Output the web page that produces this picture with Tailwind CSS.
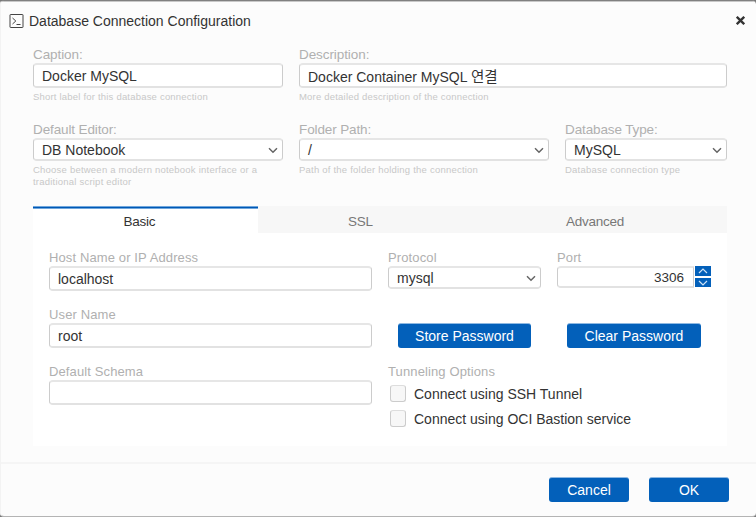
<!DOCTYPE html>
<html lang="en">
<head>
<meta charset="utf-8">
<title>Database Connection Configuration</title>
<script src="https://cdn.jsdelivr.net/npm/@tailwindcss/browser@4"></script>
</head>
<body class="bg-[#777]">
<div class="w-[756px] h-[517px] flex flex-col overflow-hidden rounded-[4px] bg-[#fcfcfc] border-l border-l-[#f3f3f3] border-t border-t-[#808080] border-b border-b-[#b4b4b4] font-['Liberation_Sans','Noto_Sans_CJK_KR',sans-serif] text-[14px] text-[#333]">
  <header class="h-[45px] shrink-0 border-t border-[#c8c8c8] flex justify-between pl-[8px] pr-[11px] pt-[11px]">
    <div class="flex h-4 items-center">
      <svg class="mr-[5px] mt-px" width="15" height="15" viewBox="0 0 15 15" fill="none" stroke="#444"><rect x="1" y=".5" width="13" height="13" rx=".5"/><path d="M3.5 4 6.8 7 3.5 10M7.5 10.5h4"/></svg>
      <h1 class="leading-4">Database Connection Configuration</h1>
    </div>
    <svg class="mt-[3px]" width="9" height="9" viewBox="0 0 9 9" fill="none" stroke="#333" stroke-width="2.3"><path d="M.8.8 8.2 8.2M8.2.8.8 8.2"/></svg>
  </header>

  <main class="pl-8 w-[726px] h-[415px] shrink-0">
    <div class="h-[75px] grid grid-cols-[250px_428px] gap-x-4">
      <div>
        <div class="h-[17px] leading-[18px] text-[13.5px] tracking-[-0.08px] text-[#b0b0b0]">Caption:</div>
        <div class="h-[25px] rounded-[4px] border border-[#ccc] border-t-2 border-t-[#e6e6e6] border-b-2 border-b-[#e2e2e2] bg-white px-2 leading-[22px]">Docker MySQL</div>
        <div class="mt-[3px] leading-3 text-[9.5px] tracking-[0.2px] text-[#c8c8c8]">Short label for this database connection</div>
      </div>
      <div>
        <div class="h-[17px] leading-[18px] text-[13.5px] tracking-[-0.08px] text-[#b0b0b0]">Description:</div>
        <div class="h-[25px] rounded-[4px] border border-[#ccc] border-t-2 border-t-[#e6e6e6] border-b-2 border-b-[#e2e2e2] bg-white px-2 leading-[24px]">Docker Container MySQL <span class="text-[14.5px] font-normal leading-none">연결</span></div>
        <div class="mt-[3px] leading-3 text-[9.5px] tracking-[0.2px] text-[#c8c8c8]">More detailed description of the connection</div>
      </div>
    </div>
    <div class="h-[85px] grid grid-cols-[250px_250px_162px] gap-x-4">
      <div>
        <div class="h-[17px] leading-[18px] text-[13.5px] tracking-[-0.12px] text-[#b0b0b0]">Default Editor:</div>
        <div class="h-[23px] rounded-[4px] border border-[#ccc] border-t-2 border-t-[#e6e6e6] border-b-2 border-b-[#e2e2e2] bg-white pl-2 pr-1 flex items-center justify-between"><span class="pt-px">DB Notebook</span><svg class="mt-px" width="10" height="7" viewBox="0 0 10 7" fill="none" stroke="#666" stroke-width="1.5"><path d="m1 1.2 4 4 4-4"/></svg></div>
        <div class="mt-[3px] leading-3 text-[9.5px] tracking-[0.22px] text-[#c8c8c8]">Choose between a modern notebook interface or a traditional script editor</div>
      </div>
      <div>
        <div class="h-[17px] leading-[18px] text-[13.5px] tracking-[-0.12px] text-[#b0b0b0]">Folder Path:</div>
        <div class="h-[23px] rounded-[4px] border border-[#ccc] border-t-2 border-t-[#e6e6e6] border-b-2 border-b-[#e2e2e2] bg-white pl-2 pr-1 flex items-center justify-between"><span class="pt-px">/</span><svg class="mt-px" width="10" height="7" viewBox="0 0 10 7" fill="none" stroke="#666" stroke-width="1.5"><path d="m1 1.2 4 4 4-4"/></svg></div>
        <div class="mt-[3px] leading-3 text-[9.5px] tracking-[0.22px] text-[#c8c8c8]">Path of the folder holding the connection</div>
      </div>
      <div>
        <div class="h-[17px] leading-[18px] text-[13.5px] tracking-[-0.12px] text-[#b0b0b0]">Database Type:</div>
        <div class="h-[23px] rounded-[4px] border border-[#ccc] border-t-2 border-t-[#e6e6e6] border-b-2 border-b-[#e2e2e2] bg-white pl-2 pr-1 flex items-center justify-between"><span class="pt-px">MySQL</span><svg class="mt-px" width="10" height="7" viewBox="0 0 10 7" fill="none" stroke="#666" stroke-width="1.5"><path d="m1 1.2 4 4 4-4"/></svg></div>
        <div class="mt-[3px] leading-3 text-[9.5px] tracking-[0.22px] text-[#c8c8c8]">Database connection type</div>
      </div>
    </div>

    <nav class="h-7 grid grid-cols-[225px_205px_264px] grid-rows-[28px] text-center text-[13.5px] tracking-[-0.25px] leading-[31px] bg-[#f7f7f7] border-b border-white">
      <div class="h-7 bg-white border-t border-[#6fa6dc] pr-3"><div class="-mr-3 h-px bg-[#0058b5]"></div><div class="-mr-3 h-px bg-[#6fa6dc]"></div><div class="leading-[25px]">Basic</div></div>
      <div class="h-[27px] text-[#777]">SSL</div>
      <div class="h-[27px] text-[#777]">Advanced</div>
    </nav>
    <section class="h-[212px] bg-white px-4 pt-[15px] flex gap-4">
      <div class="w-[323px]">
        <div class="h-[17px] leading-[17px] text-[13px] tracking-[0.12px] text-[#b0b0b0]">Host Name or IP Address</div>
        <div class="h-[25px] mb-[15px] rounded-[4px] border border-[#ccc] border-t-2 border-t-[#e6e6e6] border-b-2 border-b-[#e2e2e2] bg-white px-2 leading-[22px]">localhost</div>
        <div class="h-[17px] leading-[17px] text-[13px] tracking-[0.12px] text-[#b0b0b0]">User Name</div>
        <div class="h-[25px] mb-[15px] rounded-[4px] border border-[#ccc] border-t-2 border-t-[#e6e6e6] border-b-2 border-b-[#e2e2e2] bg-white px-2 leading-[22px]">root</div>
        <div class="h-[17px] leading-[17px] text-[13px] tracking-[0.12px] text-[#b0b0b0]">Default Schema</div>
        <div class="h-[25px] rounded-[4px] border border-[#ccc] border-t-2 border-t-[#e6e6e6] border-b-2 border-b-[#e2e2e2] bg-white"></div>
      </div>
      <div class="w-[323px]">
        <div class="flex gap-4 h-[74px]">
          <div class="w-[153px]">
            <div class="h-[17px] leading-[17px] text-[13px] tracking-[0.12px] text-[#b0b0b0]">Protocol</div>
            <div class="h-[23px] rounded-[4px] border border-[#ccc] border-t-2 border-t-[#e6e6e6] border-b-2 border-b-[#e2e2e2] bg-white pl-2 pr-1 flex items-center justify-between"><span class="pt-px">mysql</span><svg class="mt-px" width="10" height="7" viewBox="0 0 10 7" fill="none" stroke="#666" stroke-width="1.5"><path d="m1 1.2 4 4 4-4"/></svg></div>
          </div>
          <div class="w-[154px]">
            <div class="h-[17px] leading-[17px] text-[13px] tracking-[0.12px] text-[#b0b0b0]">Port</div>
            <div class="flex h-[22px]">
              <div class="w-[137px] mr-px rounded-l-[4px] border border-[#ccc] border-t-2 border-t-[#e6e6e6] border-b-2 border-b-[#e2e2e2] text-right pr-[9px] text-[13.5px] leading-[19px]">3306</div>
              <div class="w-4 flex flex-col gap-[2px]">
                <div class="h-[10px] bg-[#0360ba] flex items-center justify-center"><svg width="10" height="6" viewBox="0 0 10 6" fill="none" stroke="#cde2f5" stroke-width="1.2"><path d="m1 5 4-4 4 4"/></svg></div>
                <div class="h-[9px] bg-[#0360ba] flex items-center justify-center"><svg width="10" height="6" viewBox="0 0 10 6" fill="none" stroke="#cde2f5" stroke-width="1.2"><path d="m1 1 4 4 4-4"/></svg></div>
              </div>
            </div>
          </div>
        </div>
        <div class="flex gap-9 pl-[10px] h-10 text-white text-center leading-[26px]">
          <div class="w-[133px] h-[25px] rounded-[3px] border-t border-[#8fb9e2] bg-[#0360ba] leading-[24px]">Store Password</div>
          <div class="w-[134px] h-[25px] rounded-[3px] border-t border-[#8fb9e2] bg-[#0360ba] leading-[24px]">Clear Password</div>
        </div>
        <div class="h-[22px] leading-[17px] text-[13px] tracking-[0.12px] text-[#b0b0b0]">Tunneling Options</div>
        <div class="flex items-center h-[17px] mb-2 pl-[2px] gap-2"><span class="w-4 h-[17px] rounded-[3px] border border-[#ccc] border-t-[#ddd] bg-[#f7f7f7]"></span><span class="pt-px">Connect using SSH Tunnel</span></div>
        <div class="flex items-center h-[17px] pl-[2px] gap-2"><span class="w-4 h-[17px] rounded-[3px] border border-[#ccc] border-t-[#ddd] bg-[#f7f7f7]"></span><span class="pt-px">Connect using OCI Bastion service</span></div>
      </div>
    </section>
  </main>

  <footer class="mt-px flex-1 border-t-2 border-[#f5f5f5] flex justify-end gap-5 pr-[27px] pt-[13px] text-white text-center">
    <div class="w-20 h-[25px] rounded-[3px] border-t border-[#8fb9e2] bg-[#0360ba] leading-[25px]">Cancel</div>
    <div class="w-20 h-[25px] rounded-[3px] border-t border-[#8fb9e2] bg-[#0360ba] leading-[25px]">OK</div>
  </footer>
</div>
</body>
</html>
